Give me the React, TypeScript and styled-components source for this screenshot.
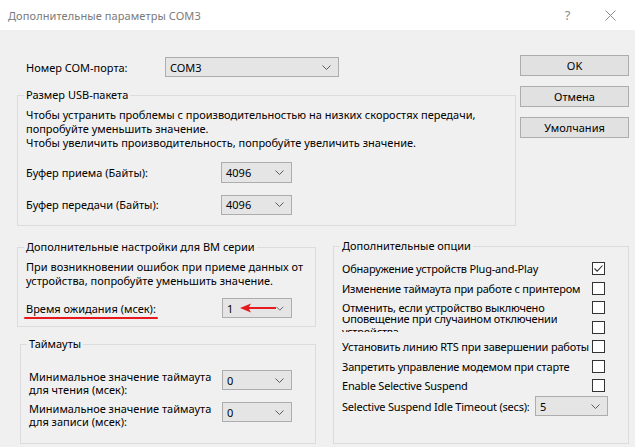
import React from "react";
import styled, { createGlobalStyle } from "styled-components";

const Global = createGlobalStyle`
  html, body { margin: 0; padding: 0; background: #f0f0f0; }
  body {
    font-family: "Noto Sans", "DejaVu Sans", sans-serif;
    font-size: 11px;
    color: #000;
  }
  * { box-sizing: border-box; }
`;

const Window = styled.div`
  width: 635px;
  height: 447px;
  display: flex;
  flex-direction: column;
  background: #f0f0f0;
  overflow: hidden;
`;

const TitleBar = styled.div`
  height: 30px;
  flex: none;
  background: #fff;
  display: flex;
  align-items: center;
  padding: 0 3px 0 8px;
`;

const Title = styled.div`
  flex: 1;
  color: #7a7a7a;
  font-size: 11px;
  letter-spacing: 0.1px;
`;

const TitleBtn = styled.div`
  width: 43px;
  height: 30px;
  display: flex;
  align-items: center;
  justify-content: center;
  color: #8a8a8a;
  font-size: 13px;
`;

const Body = styled.div`
  flex: 1;
  min-height: 0;
  display: flex;
  flex-direction: column;
  padding: 25px 6px 3px 17px;
`;

const TopSection = styled.div`
  flex: none;
  display: flex;
  align-items: flex-start;
`;

const LeftTop = styled.div`
  width: 499px;
  display: flex;
  flex-direction: column;
`;

const ComRow = styled.div`
  margin-top: 2px;
  height: 20px;
  display: flex;
  align-items: center;
  padding-left: 9px;
`;

const ComLabel = styled.div`
  width: 139px;
`;

const ButtonCol = styled.div`
  margin-left: 4px;
  width: 109px;
  display: flex;
  flex-direction: column;
  gap: 10px;
`;

const Button = styled.div`
  height: 21px;
  border: 1px solid #adadad;
  background: #e1e1e1;
  display: flex;
  align-items: center;
  justify-content: center;
`;

/* Windows-style group box: the title sits on the top border line */
const Group = styled.section<{
  $mt: number;
  $ml?: number;
  $pb?: number;
  $pr?: number;
  $grow?: boolean;
  $w?: number;
}>`
  margin: ${(p) => p.$mt}px 0 0 ${(p) => p.$ml ?? 0}px;
  border: 1px solid #dcdcdc;
  padding: 0 ${(p) => p.$pr ?? 8}px ${(p) => p.$pb ?? 8}px 8px;
  display: flex;
  flex-direction: column;
  ${(p) => (p.$grow ? "flex: 1;" : "flex: none;")}
  ${(p) => (p.$w ? `width: ${p.$w}px;` : "")}
`;

const GroupTitle = styled.div<{ $mb: number }>`
  align-self: flex-start;
  margin: -9px 0 ${(p) => p.$mb}px -2px;
  padding: 0 2px;
  height: 16px;
  line-height: 16px;
  background: #f0f0f0;
  white-space: nowrap;
`;

const Para = styled.div`
  line-height: 14px;
  white-space: nowrap;
`;

const FieldGrid = styled.div<{ $mt: number; $label: number; $gap: number; $row: number }>`
  margin-top: ${(p) => p.$mt}px;
  display: grid;
  grid-template-columns: ${(p) => p.$label}px auto;
  grid-auto-rows: ${(p) => p.$row}px;
  row-gap: ${(p) => p.$gap}px;
  align-items: center;
  justify-items: start;
`;

const TwoLineLabel = styled.div`
  line-height: 13px;
  align-self: start;
  white-space: nowrap;
`;

const SelectBox = styled.div<{ $w: number; $h: number; $top?: boolean }>`
  width: ${(p) => p.$w}px;
  height: ${(p) => p.$h}px;
  border: 1px solid #adadad;
  background: #e5e5e5;
  display: flex;
  align-items: center;
  padding: 0 7px 0 4px;
  ${(p) => (p.$top ? "align-self: start;" : "")}
`;

const SelectValue = styled.span`
  flex: 1;
  display: flex;
  align-items: center;
  gap: 7px;
`;

const Chevron = () => (
  <svg width="9" height="5" viewBox="0 0 9 5">
    <path d="M0.5 0.5 L4.5 4.5 L8.5 0.5" fill="none" stroke="#5a5a5a" strokeWidth="1" />
  </svg>
);

const RedArrow = () => (
  <svg width="36" height="10" viewBox="0 0 36 10">
    <path d="M0 5 L11 0.5 L9 4 L36 4 L36 6 L9 6 L11 9.5 Z" fill="#e8191d" />
  </svg>
);

const Select: React.FC<{ w: number; h?: number; value: string; top?: boolean; children?: React.ReactNode }> = ({
  w,
  h = 21,
  value,
  top,
  children,
}) => (
  <SelectBox $w={w} $h={h} $top={top}>
    <SelectValue>
      {value}
      {children}
    </SelectValue>
    <Chevron />
  </SelectBox>
);

const Underlined = styled.span`
  position: relative;
  &::after {
    content: "";
    position: absolute;
    left: -2px;
    right: -2px;
    bottom: -3px;
    height: 2px;
    border-radius: 1px;
    background: #e8191d;
  }
`;

const BottomSection = styled.div`
  flex: 1;
  min-height: 0;
  display: flex;
  align-items: stretch;
`;

const LeftBottom = styled.div`
  width: 302px;
  display: flex;
  flex-direction: column;
`;

const OptionList = styled.div`
  display: flex;
  flex-direction: column;
  letter-spacing: -0.2px;
`;

const OptionRow = styled.div<{ $h: number }>`
  height: ${(p) => p.$h}px;
  display: flex;
  align-items: center;
  justify-content: space-between;
  white-space: nowrap;
`;

const ClippedLabel = styled.div`
  align-self: flex-start;
  height: 15px;
  overflow: hidden;
  line-height: 13px;
  & > span {
    display: block;
    margin-top: -5px;
  }
`;

const CheckBox = styled.div`
  width: 13px;
  height: 13px;
  margin-right: 3px;
  border: 1px solid #333;
  background: #fff;
  display: flex;
  align-items: center;
  justify-content: center;
  flex: none;
`;

const Check = () => (
  <svg width="11" height="11" viewBox="0 0 11 11">
    <path d="M1.5 5.5 L4.2 8.2 L9.5 2.5" fill="none" stroke="#333" strokeWidth="1.1" />
  </svg>
);

const CloseIcon = () => (
  <svg width="11" height="11" viewBox="0 0 11 11">
    <path d="M0.5 0.5 L10.5 10.5 M10.5 0.5 L0.5 10.5" stroke="#8a8a8a" strokeWidth="1" />
  </svg>
);

export default function App() {
  return (
    <>
      <Global />
      <Window>
        <TitleBar>
          <Title>Дополнительные параметры COM3</Title>
          <TitleBtn>?</TitleBtn>
          <TitleBtn>
            <CloseIcon />
          </TitleBtn>
        </TitleBar>
        <Body>
          <TopSection>
            <LeftTop>
              <ComRow>
                <ComLabel>Номер COM-порта:</ComLabel>
                <Select w={174} h={20} value="COM3" />
              </ComRow>
              <Group $mt={18} $pb={10}>
                <GroupTitle $mb={5}>Размер USB-пакета</GroupTitle>
                <Para>
                  Чтобы устранить проблемы с производительностью на низких скоростях передачи,
                  <br />
                  попробуйте уменьшить значение.
                  <br />
                  Чтобы увеличить производительность, попробуйте увеличить значение.
                </Para>
                <FieldGrid $mt={12} $label={195} $gap={11} $row={21}>
                  <span>Буфер приема (Байты):</span>
                  <Select w={71} value="4096" />
                  <span>Буфер передачи (Байты):</span>
                  <Select w={71} h={20} value="4096" />
                </FieldGrid>
              </Group>
            </LeftTop>
            <ButtonCol>
              <Button>OK</Button>
              <Button>Отмена</Button>
              <Button>Умолчания</Button>
            </ButtonCol>
          </TopSection>
          <BottomSection>
            <LeftBottom>
              <Group $mt={21} $pb={8}>
                <GroupTitle $mb={5}>Дополнительные настройки для BM серии</GroupTitle>
                <Para>
                  При возникновении ошибок при приеме данных от
                  <br />
                  устройства, попробуйте уменьшить значение.
                </Para>
                <FieldGrid $mt={10} $label={196} $gap={0} $row={20}>
                  <span>
                    <Underlined>Время ожидания (мсек):</Underlined>
                  </span>
                  <Select w={70} h={20} value="1">
                    <RedArrow />
                  </Select>
                </FieldGrid>
              </Group>
              <Group $mt={17} $ml={3} $grow>
                <GroupTitle $mb={18}>Таймауты</GroupTitle>
                <FieldGrid $mt={0} $label={193} $gap={6} $row={26}>
                  <TwoLineLabel>
                    Минимальное значение таймаута
                    <br />
                    для чтения (мсек):
                  </TwoLineLabel>
                  <Select w={70} h={20} value="0" top />
                  <TwoLineLabel>
                    Минимальное значение таймаута
                    <br />
                    для записи (мсек):
                  </TwoLineLabel>
                  <Select w={70} h={20} value="0" top />
                </FieldGrid>
              </Group>
            </LeftBottom>
            <Group $mt={20} $ml={17} $w={296} $pr={20}>
              <GroupTitle $mb={4}>Дополнительные опции</GroupTitle>
              <OptionList>
                <OptionRow $h={20}>
                  <span>Обнаружение устройств Plug-and-Play</span>
                  <CheckBox>
                    <Check />
                  </CheckBox>
                </OptionRow>
                <OptionRow $h={20}>
                  <span>Изменение таймаута при работе с принтером</span>
                  <CheckBox />
                </OptionRow>
                <OptionRow $h={19}>
                  <span>Отменить, если устройство выключено</span>
                  <CheckBox />
                </OptionRow>
                <OptionRow $h={20}>
                  <ClippedLabel>
                    <span>
                      Оповещение при случайном отключении
                      <br />
                      устройства
                    </span>
                  </ClippedLabel>
                  <CheckBox />
                </OptionRow>
                <OptionRow $h={19}>
                  <span>Установить линию RTS при завершении работы</span>
                  <CheckBox />
                </OptionRow>
                <OptionRow $h={20}>
                  <span>Запретить управление модемом при старте</span>
                  <CheckBox />
                </OptionRow>
                <OptionRow $h={19}>
                  <span>Enable Selective Suspend</span>
                  <CheckBox />
                </OptionRow>
                <OptionRow $h={22}>
                  <span>Selective Suspend Idle Timeout (secs):</span>
                  <Select w={73} h={20} value="5" />
                </OptionRow>
              </OptionList>
            </Group>
          </BottomSection>
        </Body>
      </Window>
    </>
  );
}
